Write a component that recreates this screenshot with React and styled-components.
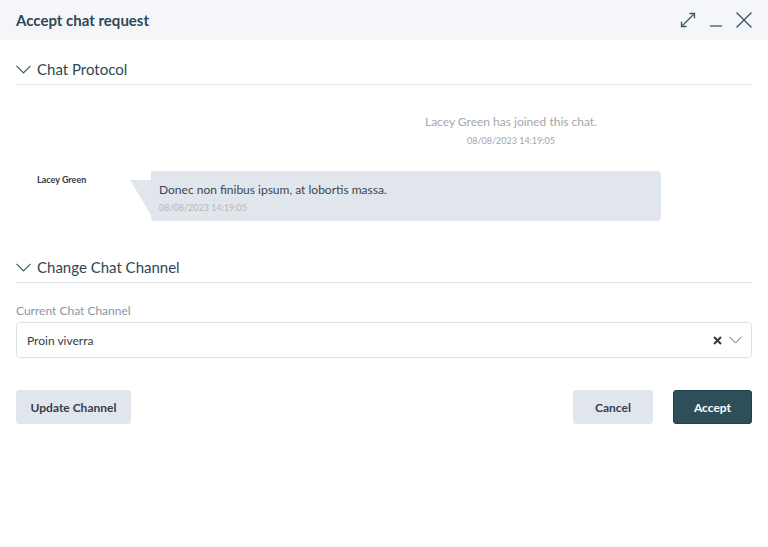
import styled, { createGlobalStyle } from 'styled-components';

const Global = createGlobalStyle`
	body {
		margin: 0;
		background: #fff;
		font-family: 'Source Sans Pro', 'Lato', 'Noto Sans', sans-serif;
	}
	* { box-sizing: border-box; }
`;

const Dialog = styled.div`
	width: 768px;
	height: 547px;
	background: #fff;
	display: flex;
	flex-direction: column;
`;

const TitleBar = styled.div`
	height: 40px;
	background: #f4f6fa;
	display: flex;
	align-items: center;
	justify-content: space-between;
	padding: 0 16px 0 16px;
`;

const Title = styled.h1`
	margin: 0;
	font-size: 15px;
	font-weight: 700;
	color: #2f4753;
`;

const Controls = styled.div`
	display: flex;
	align-items: center;
	gap: 14px;
	svg {
		display: block;
	}
`;

const Body = styled.div`
	padding: 18px 16px 0;
	display: flex;
	flex-direction: column;
`;

const SectionHead = styled.div`
	display: flex;
	align-items: center;
	gap: 6px;
	height: 22px;
	border-bottom: 1px solid #e1e4e8;
	box-sizing: content-box;
	padding-bottom: 4px;
	font-size: 15px;
	color: #2f4753;
	margin-top: ${(p) => p.$top || 0}px;
	svg {
		display: block;
	}
`;

const Protocol = styled.div`
	display: flex;
	flex-direction: column;
	padding-top: 29px;
`;

const SystemMsg = styled.div`
	align-self: flex-end;
	width: 482px;
	text-align: center;
	color: #a2a7ab;
	font-size: 12px;
	line-height: 16px;
`;

const Stamp = styled.div`
	font-size: 9px;
	line-height: 12px;
	margin-top: ${(p) => p.$top || 0}px;
	color: ${(p) => (p.$light ? '#b4b8bc' : '#a2a7ab')};
`;

const MsgRow = styled.div`
	display: flex;
	align-items: flex-start;
	margin-top: 24px;
`;

const Sender = styled.div`
	width: 114px;
	padding: 3px 0 0 21px;
	font-size: 9px;
	font-weight: 700;
	color: #2f3d48;
`;

const Tail = styled.div`
	width: 21px;
	height: 35px;
	margin-top: 9px;
	background: #e1e5ec;
	clip-path: polygon(0 0, 100% 0, 100% 100%);
`;

const Bubble = styled.div`
	width: 510px;
	height: 50px;
	background: #e1e5ec;
	border-radius: 0 4px 4px 4px;
	padding: 11px 8px 0;
	font-size: 12px;
	line-height: 16px;
	color: #3a4752;
`;

const Label = styled.div`
	margin-top: 20px;
	font-size: 12px;
	color: #8996a3;
	line-height: 16px;
`;

const Select = styled.div`
	margin-top: 3px;
	height: 36px;
	border: 1px solid #dde1e6;
	border-radius: 4px;
	display: flex;
	align-items: center;
	padding: 0 9px 0 10px;
	font-size: 12px;
	color: #2f3d48;
`;

const Value = styled.div`
	flex: 1;
`;

const SelectIcons = styled.div`
	display: flex;
	align-items: center;
	gap: 7px;
	svg {
		display: block;
	}
`;

const Actions = styled.div`
	display: flex;
	align-items: center;
	margin-top: 32px;
	gap: 20px;
`;

const Spacer = styled.div`
	flex: 1;
`;

const Button = styled.button`
	height: 34px;
	width: ${(p) => p.$w}px;
	border-radius: 3px;
	border: 1px solid ${(p) => (p.$primary ? '#243f49' : '#e1e5ec')};
	background: ${(p) => (p.$primary ? '#2e4e59' : '#e1e5ec')};
	color: ${(p) => (p.$primary ? '#fff' : '#333f4c')};
	font-family: inherit;
	font-size: 12px;
	font-weight: 700;
	padding: 0;
	cursor: pointer;
`;

const Chevron = ({ size = 15, color = '#3d5965' }) => (
	<svg width={size} height={size * 0.6} viewBox="0 0 15 9" fill="none">
		<path d="M0.5 0.8 L7.5 8 L14.5 0.8" stroke={color} strokeWidth="1.1" />
	</svg>
);

export default function App() {
	return (
		<>
			<Global />
			<Dialog>
				<TitleBar>
					<Title>Accept chat request</Title>
					<Controls>
						<svg width="16" height="16" viewBox="0 0 16 16" fill="none" stroke="#3d5965" strokeWidth="1.3">
							<path d="M1.5 14.5 L14.5 1.5" />
							<path d="M9.5 1.5 H14.5 V6.5" />
							<path d="M1.5 9.5 V14.5 H6.5" />
						</svg>
						<svg width="12" height="16" viewBox="0 0 12 16" fill="none" stroke="#3d5965" strokeWidth="1.3">
							<path d="M0 14 H12" />
						</svg>
						<svg width="16" height="16" viewBox="0 0 16 16" fill="none" stroke="#3d5965" strokeWidth="1.4">
							<path d="M0.5 0.5 L15.5 15.5 M15.5 0.5 L0.5 15.5" />
						</svg>
					</Controls>
				</TitleBar>
				<Body>
					<SectionHead>
						<Chevron />
						Chat Protocol
					</SectionHead>
					<Protocol>
						<SystemMsg>
							Lacey Green has joined this chat.
							<Stamp $top={5}>08/08/2023 14:19:05</Stamp>
						</SystemMsg>
						<MsgRow>
							<Sender>Lacey Green</Sender>
							<Tail />
							<Bubble>
								Donec non finibus ipsum, at lobortis massa.
								<Stamp $light $top={4}>08/08/2023 14:19:05</Stamp>
							</Bubble>
						</MsgRow>
					</Protocol>
					<SectionHead $top={35}>
						<Chevron />
						Change Chat Channel
					</SectionHead>
					<Label>Current Chat Channel</Label>
					<Select>
						<Value>Proin viverra</Value>
						<SelectIcons>
							<svg width="9" height="9" viewBox="0 0 9 9" stroke="#2f3d48" strokeWidth="2">
								<path d="M1 1 L8 8 M8 1 L1 8" />
							</svg>
							<svg width="13" height="8" viewBox="0 0 13 8" fill="none" stroke="#5d6a76" strokeWidth="1">
								<path d="M0.5 0.8 L6.5 7 L12.5 0.8" />
							</svg>
						</SelectIcons>
					</Select>
					<Actions>
						<Button $w={115}>Update Channel</Button>
						<Spacer />
						<Button $w={80}>Cancel</Button>
						<Button $w={79} $primary>Accept</Button>
					</Actions>
				</Body>
			</Dialog>
		</>
	);
}
